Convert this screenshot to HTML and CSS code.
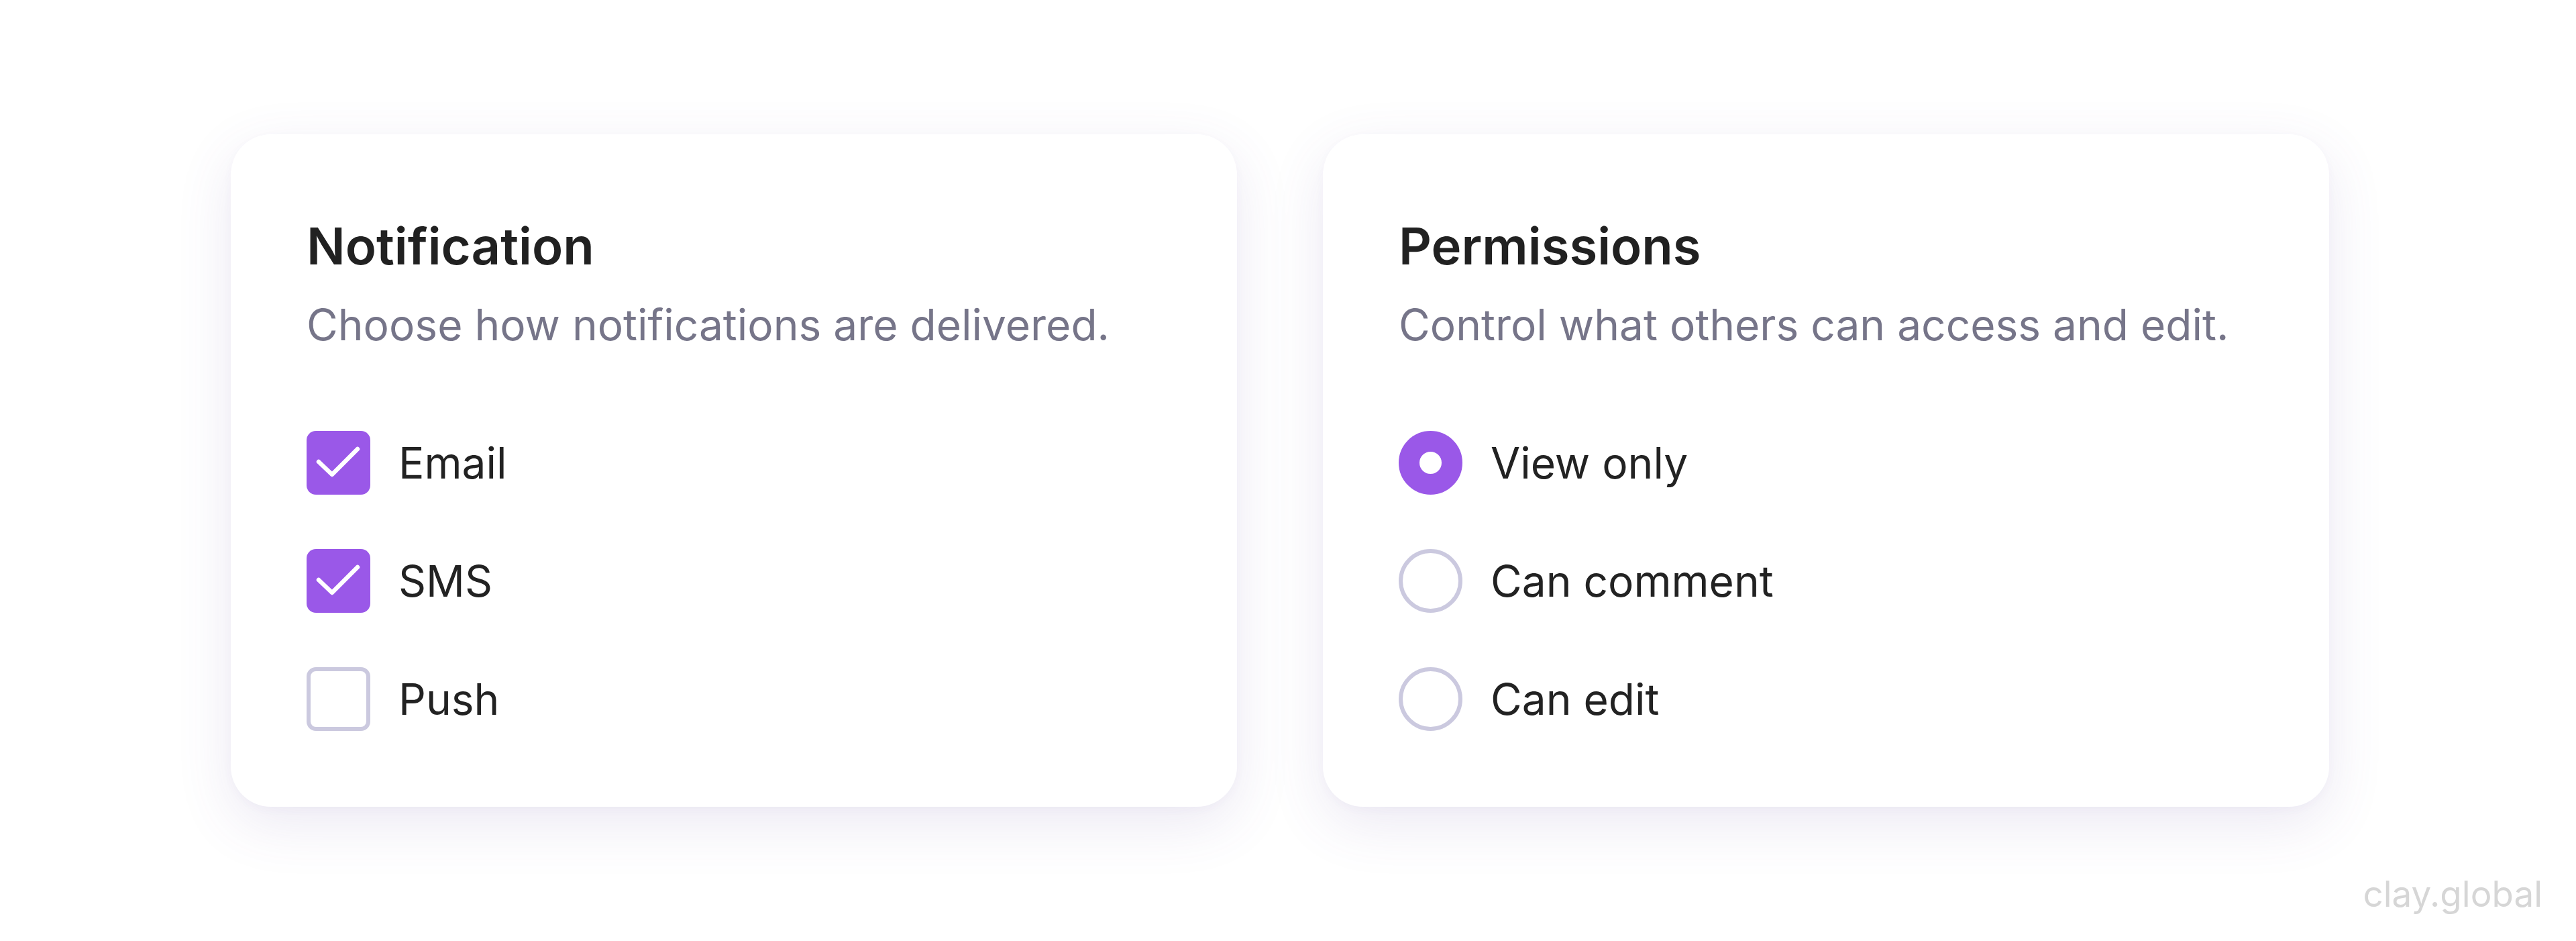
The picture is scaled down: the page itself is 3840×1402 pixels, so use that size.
FILE: index.html
```html
<!DOCTYPE html>
<html lang="en">
<head>
<meta charset="utf-8">
<title>Notification &amp; Permissions</title>
<link rel="stylesheet" href="styles.css">
</head>
<body>
<main class="stage">
  <section class="card">
    <h2 class="card-title">Notification</h2>
    <p class="card-sub">Choose how notifications are delivered.</p>
    <ul class="options">
      <li class="option">
        <span class="check is-on">
          <svg viewBox="0 0 95 95" class="tick"><path d="M18 46 L38 65 L76 27"/></svg>
        </span>
        <span class="label">Email</span>
      </li>
      <li class="option">
        <span class="check is-on">
          <svg viewBox="0 0 95 95" class="tick"><path d="M18 46 L38 65 L76 27"/></svg>
        </span>
        <span class="label">SMS</span>
      </li>
      <li class="option">
        <span class="check"></span>
        <span class="label">Push</span>
      </li>
    </ul>
  </section>
  <section class="card">
    <h2 class="card-title">Permissions</h2>
    <p class="card-sub">Control what others can access and edit.</p>
    <ul class="options">
      <li class="option">
        <span class="radio is-on"></span>
        <span class="label">View only</span>
      </li>
      <li class="option">
        <span class="radio"></span>
        <span class="label">Can comment</span>
      </li>
      <li class="option">
        <span class="radio"></span>
        <span class="label">Can edit</span>
      </li>
    </ul>
  </section>
</main>
<div class="watermark">clay.global</div>
</body>
</html>
```

FILE: styles.css
```css
* { box-sizing: border-box; }

html, body {
  margin: 0;
  padding: 0;
  background: #ffffff;
}

body {
  width: 3840px;
  height: 1402px;
  position: relative;
  overflow: hidden;
  font-family: "Inter", "Noto Sans", "Liberation Sans", sans-serif;
  color: #222222;
}

.stage {
  display: flex;
  gap: 128px;
  padding: 200px 0 0 344px;
}

.card {
  width: 1500px;
  height: 1002px;
  background: #ffffff;
  border-radius: 60px;
  padding: 120px 113px 113px 113px;
  box-shadow: 0 26px 84px rgba(96, 72, 160, 0.12), 0 4px 14px rgba(96, 72, 160, 0.03);
}

.card-title {
  margin: 0;
  font-size: 76px;
  line-height: 92px;
  font-weight: 600;
  color: #212121;
  letter-spacing: 0;
}

.card-sub {
  margin: 34px 0 0 0;
  font-size: 64px;
  line-height: 76px;
  font-weight: 400;
  color: #767589;
}

.options {
  list-style: none;
  margin: 120px 0 0 0;
  padding: 0;
  display: flex;
  flex-direction: column;
  gap: 81px;
}

.option {
  display: flex;
  align-items: center;
  gap: 42px;
  height: 95px;
}

.label {
  font-size: 64px;
  line-height: 78px;
  font-weight: 400;
  color: #222222;
}

.check {
  width: 95px;
  height: 95px;
  flex: none;
  border-radius: 14px;
  border: 6px solid #cbc9df;
  background: #ffffff;
  display: flex;
}

.check.is-on {
  border: none;
  background: #9a58e8;
}

.tick {
  width: 95px;
  height: 95px;
  fill: none;
  stroke: #ffffff;
  stroke-width: 6.5;
  stroke-linecap: round;
  stroke-linejoin: round;
}

.radio {
  width: 95px;
  height: 95px;
  flex: none;
  border-radius: 50%;
  border: 6px solid #cbc9df;
  background: #ffffff;
}

.radio.is-on {
  border: 31px solid #9a58e8;
}

.watermark {
  position: absolute;
  right: 50px;
  bottom: 37px;
  font-size: 53px;
  line-height: 65px;
  color: #d6d6d6;
  font-weight: 400;
}
```
